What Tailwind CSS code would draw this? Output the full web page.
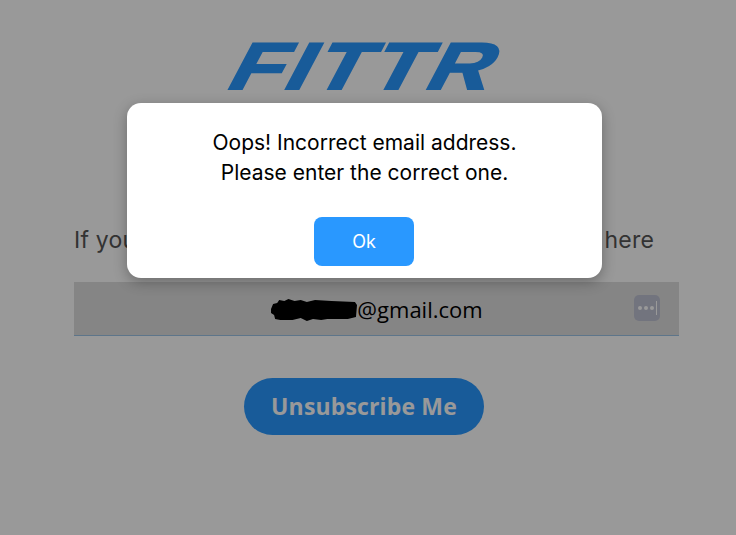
<!DOCTYPE html>
<html lang="en">
<head>
<meta charset="utf-8">
<title>Unsubscribe</title>
<script src="https://cdn.jsdelivr.net/npm/@tailwindcss/browser@4"></script>
</head>
<body class="bg-white overflow-hidden font-['Inter',sans-serif]">
  <div class="relative h-[535px] w-[736px] overflow-hidden">
    <!-- page -->
    <main class="flex w-[728px] flex-col items-center pt-[26px]">
      <div class="ml-[8px] flex h-[80px] w-[276px] items-center justify-center font-['Liberation_Sans',sans-serif] text-[66px] leading-none font-bold tracking-[3px] text-[#2998ff] [-webkit-text-stroke:2px_#2998ff] -skew-x-[22deg] scale-x-[1.31]">FITTR</div>

      <p class="mt-[118px] ml-[74px] flex h-[32px] w-[580px] items-center justify-between self-start text-[23px] leading-none tracking-[0.2px] text-[#555]">
        <span>If you want to leave,</span>
        <span>enter your email here</span>
      </p>

      <div class="relative mt-[26px] ml-[25px] flex h-[54px] w-[605px] items-center justify-center border-b border-[#9cc3e6] bg-[#dedede] pt-[2px] font-['Open_Sans',sans-serif] text-[22px] text-black">
        <svg class="h-[26px] w-[87px]" viewBox="0 0 85 26" preserveAspectRatio="none"><path d="M1 12 3 7 7 6 9 3 14 4 18 2 24 4 30 3 36 5 44 3 60 4 83 5 85 8 84 20 76 22 56 22 50 23 42 22 36 24 30 21 22 23 10 23 5 22 4 18 1 16Z" fill="#000"/></svg>
        <span>@gmail.com</span>
        <div class="absolute top-[13px] right-[19px] flex h-[26px] w-[26px] items-center justify-center gap-[2px] rounded-[5px] bg-[#bfc2d3]">
          <span class="h-[4px] w-[4px] rounded-full bg-white"></span>
          <span class="h-[4px] w-[4px] rounded-full bg-white"></span>
          <span class="h-[4px] w-[4px] rounded-full bg-white"></span>
          <span class="h-[14px] w-px bg-white"></span>
        </div>
      </div>

      <button class="mt-[42px] h-[57px] w-[240px] rounded-full bg-[#2998ff] font-['Open_Sans',sans-serif] text-[23px] font-bold tracking-[0.15px] text-white">Unsubscribe Me</button>
    </main>

    <!-- scrim -->
    <div class="absolute inset-0 bg-black/40"></div>

    <!-- alert -->
    <div class="absolute top-[103px] left-[127px] flex h-[175px] w-[475px] flex-col items-center rounded-[14px] bg-white pt-[25px] shadow-[0_4px_14px_rgba(0,0,0,0.3)]">
      <p class="text-center text-[21px] leading-[30px] text-black">Oops! Incorrect email address.<br>Please enter the correct one.</p>
      <button class="mt-[29px] -ml-[1px] h-[49px] w-[100px] rounded-[8px] bg-[#2998ff] text-[18px] text-white">Ok</button>
    </div>
  </div>
</body>
</html>
